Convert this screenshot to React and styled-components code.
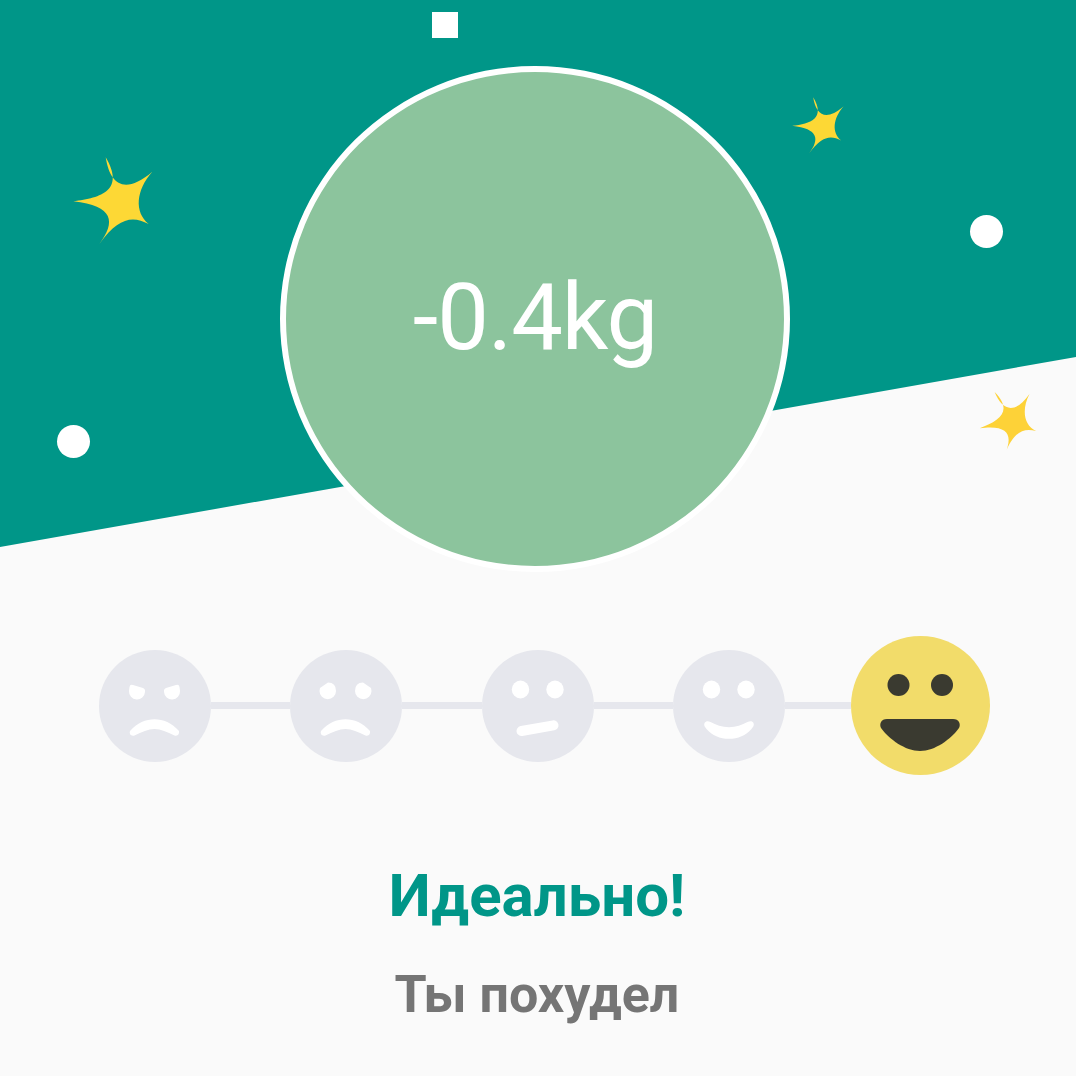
import React from "react";
import styled, { createGlobalStyle } from "styled-components";

const Global = createGlobalStyle`
  html, body { margin: 0; padding: 0; background: #fafafa; }
  body { font-family: Roboto, "Noto Sans", sans-serif; }
`;

const Page = styled.div`
  width: 1076px;
  height: 1076px;
  overflow: hidden;
  background: #fafafa;
  display: flex;
  flex-direction: column;
`;

const Hero = styled.section`
  position: relative;
  height: 576px;
  flex: none;
  display: flex;
  justify-content: center;
  padding: 66px 6px 0 0;
  box-sizing: border-box;
  &::before {
    content: "";
    position: absolute;
    inset: 0;
    background: #009688;
    clip-path: polygon(0 0, 100% 0, 100% 357px, 0 547px);
  }
`;

const Result = styled.div`
  position: relative;
  width: 510px;
  height: 506px;
  box-sizing: border-box;
  border: 6px solid #fff;
  border-radius: 50%;
  background: #8cc49d;
  display: flex;
  align-items: center;
  justify-content: center;
  color: #fff;
  font-size: 92px;
  font-weight: 400;
  letter-spacing: -1px;
  line-height: 1;
  padding-bottom: 2px;
`;

const Dot = styled.span`
  position: absolute;
  left: ${(p) => p.$x}px;
  top: ${(p) => p.$y}px;
  width: 33px;
  height: 33px;
  border-radius: 50%;
  background: #fff;
`;

const Square = styled.span`
  position: absolute;
  left: 432px;
  top: 12px;
  width: 26px;
  height: 26px;
  background: #fff;
`;

const StarSvg = styled.svg`
  position: absolute;
  left: ${(p) => p.$x}px;
  top: ${(p) => p.$y}px;
  transform: rotate(${(p) => p.$r || 0}deg);
`;

const Star = ({ x, y, size, r, color }) => (
  <StarSvg $x={x} $y={y} $r={r} width={size} height={size} viewBox="0 0 120 120">
    <path
      fill={color}
      d="M55.7 17.3C60 45 75 55 102.3 31.7C86 50 84 72 98.7 84C82 75 68 78 49.3 104C66 82 64 66 23.3 61.3C52 58 75 50 55.7 17.3Z"
    />
  </StarSvg>
);

const Rating = styled.div`
  display: flex;
  align-items: center;
  margin-top: 60px;
  padding-left: 99px;
  height: 139px;
  flex: none;
`;

const FaceSvg = styled.svg`
  flex: none;
  display: block;
`;

const Connector = styled.span`
  flex: none;
  width: ${(p) => p.$w}px;
  height: 7px;
  background: #e6e7ed;
`;

const GRAY = "#e6e7ed";

const SmallFace = ({ children }) => (
  <FaceSvg width="112" height="112" viewBox="0 0 112 112">
    <circle cx="56" cy="56" r="56" fill={GRAY} />
    <g fill="#fff">{children}</g>
  </FaceSvg>
);

const FROWN =
  "M31 81C38 73 47 69.3 55.5 69.3C64 69.3 73 73 80 81C80.5 84 79 86.5 75.5 85.5C68 82 62 79 55.5 79C49 79 43 82 35.5 85.5C32 86.5 30 84 31 81Z";

const Labels = styled.div`
  display: flex;
  flex-direction: column;
  align-items: center;
  margin-top: 86px;
  padding-right: 2px;
  font-weight: 700;
`;

const Title = styled.h1`
  margin: 0;
  font-size: 60px;
  line-height: 70px;
  font-weight: 700;
  color: #009688;
`;

const Subtitle = styled.h2`
  margin: 34px 0 0;
  font-size: 52px;
  line-height: 60px;
  font-weight: 700;
  color: #757575;
`;

export default function App() {
  return (
    <Page>
      <Global />
      <Hero>
        <Square />
        <Dot $x={970} $y={215} />
        <Dot $x={57} $y={425} />
        <Star x={50} y={140} size={120} color="#fdd835" />
        <Star x={777} y={86} size={78} color="#fdd835" />
        <Star x={962} y={378} size={86} r={-14} color="#fdd238" />
        <Result>-0.4kg</Result>
      </Hero>
      <Rating>
        <SmallFace>
          <path d="M30.5 37Q31 34 34 35L44 38Q46.5 39 46 42A8 8 0 0 1 30 41Z" />
          <path d="M80.5 37Q80 34 77 35L67 38Q64.5 39 65 42A8 8 0 0 0 81 41Z" />
          <path d={FROWN} />
        </SmallFace>
        <Connector $w={79} />
        <SmallFace>
          <path d="M30 38L38 32.5Q46 32.5 46 41A8.2 8.2 0 0 1 29.5 41Z" />
          <path d="M81 38L73 32.5Q65 32.5 65 41A8.2 8.2 0 0 0 81.5 41Z" />
          <path d={FROWN} />
        </SmallFace>
        <Connector $w={80} />
        <SmallFace>
          <ellipse cx="38.5" cy="39.5" rx="8.7" ry="9" />
          <ellipse cx="73" cy="39.5" rx="8.7" ry="9" />
          <path d="M39.5 81L71.5 75.3" stroke="#fff" strokeWidth="10" strokeLinecap="round" />
        </SmallFace>
        <Connector $w={79} />
        <SmallFace>
          <ellipse cx="38.5" cy="39.5" rx="8.7" ry="9" />
          <ellipse cx="73" cy="39.5" rx="8.7" ry="9" />
          <path d="M31.5 73C33 71 35 71 37.5 72C43 75 49 77.2 56 77.2C63 77.2 69 75 74.5 72C77 71 79.5 71 80.5 73C81.5 75.5 80 77 78.5 79C73 85.5 65 88.8 56 88.8C47 88.8 39 85.5 33.5 79C32 77 30.5 75.5 31.5 73Z" />
        </SmallFace>
        <Connector $w={66} />
        <FaceSvg width="139" height="139" viewBox="0 0 139 139">
          <circle cx="69.5" cy="69.5" r="69.5" fill="#f2dc6a" />
          <ellipse cx="47.5" cy="49" rx="11" ry="11" fill="#3a3a30" />
          <ellipse cx="91" cy="49" rx="11" ry="11" fill="#3a3a30" />
          <path
            fill="#3a3a30"
            d="M36 83H102C108 83 110 88 108 92C100 103 84 115 69 115C54 115 38 103 30 92C28 88 30 83 36 83Z"
          />
        </FaceSvg>
      </Rating>
      <Labels>
        <Title>Идеально!</Title>
        <Subtitle>Ты похудел</Subtitle>
      </Labels>
    </Page>
  );
}
